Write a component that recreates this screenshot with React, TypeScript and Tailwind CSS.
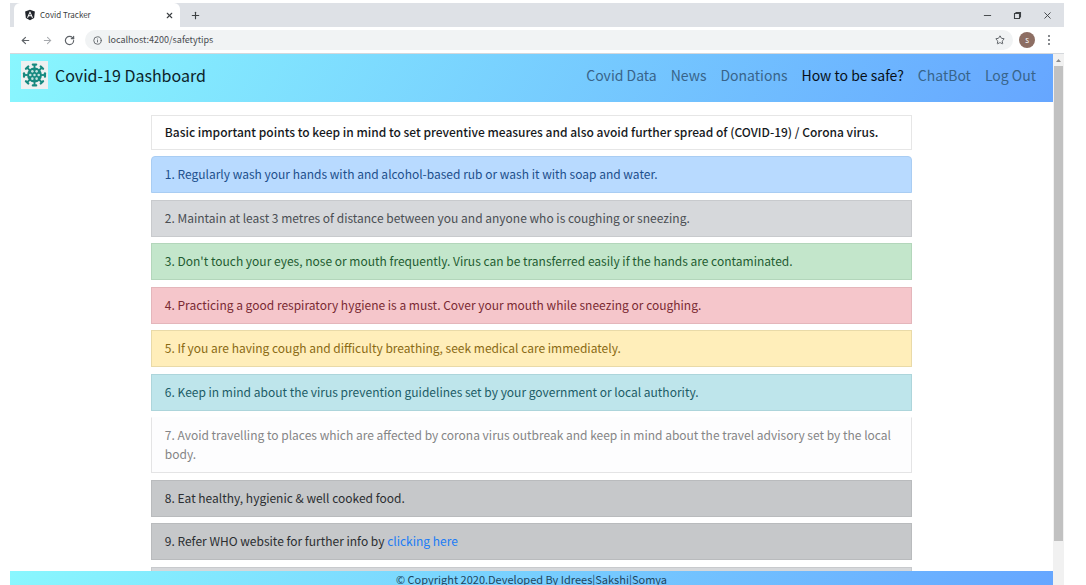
import { ArrowLeft, ArrowRight, Info, Minus, Plus, RotateCw, Star, X } from "lucide-react";
import { FaAngular } from "react-icons/fa";

const links = ["Covid Data", "News", "Donations", "How to be safe?", "ChatBot", "Log Out"];

const tips = [
  { text: "Regularly wash your hands with and alcohol-based rub or wash it with soap and water.", tone: "bg-[#b8daff] border-[#a9cdf3] text-[#1d4f8c] rounded-t-sm" },
  { text: "Maintain at least 3 metres of distance between you and anyone who is coughing or sneezing.", tone: "bg-[#d6d8db] border-[#c8cacd] text-[#4a4e53]" },
  { text: "Don't touch your eyes, nose or mouth frequently. Virus can be transferred easily if the hands are contaminated.", tone: "bg-[#c3e6cb] border-[#b3d6bb] text-[#1f5c31]" },
  { text: "Practicing a good respiratory hygiene is a must. Cover your mouth while sneezing or coughing.", tone: "bg-[#f5c6cb] border-[#e4b6bb] text-[#7a2a33]" },
  { text: "If you are having cough and difficulty breathing, seek medical care immediately.", tone: "bg-[#ffeeba] border-[#e9daa8] text-[#8a6a14]" },
  { text: "Keep in mind about the virus prevention guidelines set by your government or local authority.", tone: "bg-[#bee5eb] border-[#add5db] text-[#1c5c66]" },
  { text: "Avoid travelling to places which are affected by corona virus outbreak and keep in mind about the travel advisory set by the local body.", tone: "bg-[#fdfdfe] border-[#e4e4e5] border-t-transparent text-[#858586]" },
  { text: "Eat healthy, hygienic & well cooked food.", tone: "bg-[#c6c8ca] border-[#b9bbbd] text-[#2b2e31]" },
  { text: "Refer WHO website for further info by ", link: "clicking here", tone: "bg-[#c6c8ca] border-[#b9bbbd] text-[#2b2e31]" },
  { text: "", tone: "bg-[#d6d8db] border-[#c8cacd] text-[#4a4e53]" },
];

const spokes = [0, 45, 90, 135, 180, 225, 270, 315];
const cells = [[0, 0], [5, 0], [-5, 0], [2.5, 4.3], [-2.5, 4.3], [2.5, -4.3], [-2.5, -4.3]];

function VirusLogo() {
  return (
    <svg viewBox="-16 -16 32 32" className="h-7 w-[27px] bg-[#eef0f0]" aria-hidden="true">
      {spokes.map((a) => (
        <g key={a} transform={`rotate(${a})`} stroke="#16897f" fill="none">
          <path d="M0-8V-12" strokeWidth="2.2" />
          <path d="M-2-12.4H2" strokeWidth="2.6" strokeLinecap="round" />
        </g>
      ))}
      <circle r="8.8" fill="#16897f" />
      {cells.map(([x, y]) => (
        <circle key={`${x},${y}`} cx={x} cy={y} r="1.5" fill="#c4e2de" />
      ))}
    </svg>
  );
}

function BrowserChrome() {
  return (
    <header className="text-[#5f6368]">
      <div className="flex h-6 items-stretch bg-[#dee1e6]">
        <div className="ml-1 flex w-[166px] items-center rounded-t-md bg-white pr-1.5 pl-2.5">
          <FaAngular className="size-3 text-[#20242a]" />
          <span className="ml-1 flex-1 text-[8px] text-[#3c4043]">Covid Tracker</span>
          <button aria-label="Close tab" className="text-[#3c4043]"><X size={9} strokeWidth={3} /></button>
        </div>
        <button aria-label="New tab" className="ml-2.5 text-[#3c4043]"><Plus size={11} strokeWidth={2.5} /></button>
        <div className="ml-auto flex items-center gap-5 pr-[11px] text-[#3c4043]">
          <button aria-label="Minimize"><Minus size={11} strokeWidth={2} /></button>
          <button aria-label="Restore">
            <svg viewBox="0 0 9 9" className="size-[9px]" fill="none" stroke="currentColor">
              <path d="M1.5 2.5h5v5h-5zM3 2.5v-1h4.5V6h-1" strokeWidth="1.1" />
            </svg>
          </button>
          <button aria-label="Close window"><X size={11} strokeWidth={2} /></button>
        </div>
      </div>
      <div className="flex h-[27px] items-center border-b border-[#d5d8dc] bg-white pr-[11px] pl-2.5">
        <button aria-label="Back"><ArrowLeft size={11} strokeWidth={2.5} /></button>
        <button aria-label="Forward" className="ml-[11px] text-[#a6a9ad]"><ArrowRight size={11} strokeWidth={2.2} /></button>
        <button aria-label="Reload" className="ml-[11px]"><RotateCw size={11} strokeWidth={2.6} /></button>
        <div className="ml-2.5 flex h-5 flex-1 items-center gap-1.5 rounded-full bg-[#f1f3f4] px-2">
          <Info size={9} strokeWidth={2.4} />
          <input aria-label="Address" readOnly value="localhost:4200/safetytips" className="min-w-0 flex-1 bg-transparent text-[9px] text-[#4a4d51] outline-none" />
          <button aria-label="Bookmark"><Star size={10} strokeWidth={2.4} /></button>
        </div>
        <button aria-label="Profile" className="ml-1.5 flex size-4 items-center justify-center rounded-full bg-[#8d6e63] text-[8px] text-white">s</button>
        <button aria-label="Menu" className="ml-2.5 flex w-2 flex-col items-center gap-0.5">
          <i className="size-0.5 rounded-full bg-[#5f6368]" />
          <i className="size-0.5 rounded-full bg-[#5f6368]" />
          <i className="size-0.5 rounded-full bg-[#5f6368]" />
        </button>
      </div>
    </header>
  );
}

export default function App() {
  return (
    <div className="flex h-screen flex-col overflow-hidden bg-white pt-[3px] pr-[22px] pl-2.5 font-['Noto_Sans_CJK_SC','Open_Sans',sans-serif]">
      <BrowserChrome />
      <div className="flex min-h-0 flex-1">
        <div className="flex min-w-0 flex-1 flex-col">
          <nav className="flex h-12 shrink-0 items-center bg-[linear-gradient(120deg,#89f7fe_0%,#66a6ff_100%)] px-[11px] pb-1.5">
            <a href="#" className="flex items-center gap-[7px] text-base text-[#0c2329]">
              <VirusLogo />
              Covid-19 Dashboard
            </a>
            <ul className="ml-auto flex gap-3.5 pr-1.5 text-sm">
              {links.map((l) => (
                <li key={l}>
                  <a href="#" className={l === "How to be safe?" ? "text-[#071019]" : "text-[#38648a]"}>{l}</a>
                </li>
              ))}
            </ul>
          </nav>
          <main className="min-h-0 flex-1 overflow-hidden px-[13.5%] pt-[13px] text-xs leading-[19px]">
            <h1 className="border border-[#e6e6e6] px-[13px] pt-1.5 pb-2 font-medium text-[#16191c]">
              Basic important points to keep in mind to set preventive measures and also avoid further spread of (COVID-19) / Corona virus.
            </h1>
            <ol>
              {tips.map((t, i) => (
                <li key={t.text} className={`min-h-[37px] border px-[13px] pt-[7px] pb-[9px] odd:mt-1.5 even:mt-[7px] ${t.tone}`}>
                  {t.text && `${i + 1}. ${t.text}`}
                  {t.link && <a href="#" className="text-[#207cf5]">{t.link}</a>}
                </li>
              ))}
            </ol>
          </main>
          <footer className="h-3.5 shrink-0 bg-[linear-gradient(120deg,#89f7fe_0%,#66a6ff_100%)] text-center text-[11px] leading-[17px] text-[#1d4660]">
            © Copyright 2020.Developed By Idrees|Sakshi|Somya
          </footer>
        </div>
        <div className="flex w-[11px] flex-col items-center bg-[#f1f1f1]" aria-hidden="true">
          <svg viewBox="0 0 11 12" className="h-3 w-[11px]" fill="#8b8b8b"><path d="M5.5 5 8 8H3z" /></svg>
          <div className="h-[89.5%] w-[9px] bg-[#c1c1c1]" />
        </div>
      </div>
    </div>
  );
}
